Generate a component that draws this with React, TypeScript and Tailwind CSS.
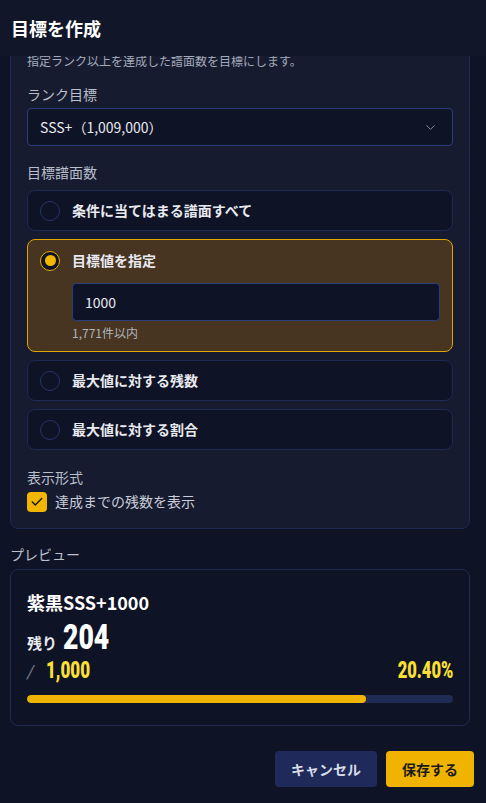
import React from "react";
import { ChevronDown, Check } from "lucide-react";

const FONT = { fontFamily: '"Noto Sans CJK JP", "Noto Sans", sans-serif' };
const NUM: React.CSSProperties = { fontFamily: '"Roboto", "Noto Sans", sans-serif' };

function Radio({ checked }: { checked?: boolean }) {
  if (checked) {
    return (
      <span className="flex h-[20px] w-[20px] shrink-0 items-center justify-center rounded-full border border-[#e8ac00] bg-[#0f1326]">
        <span className="h-[11px] w-[11px] rounded-full bg-[#f2b600]" />
      </span>
    );
  }
  return <span className="h-[20px] w-[20px] shrink-0 rounded-full border border-[#26346a] bg-[#0f1326]" />;
}

function Option({ label }: { label: string }) {
  return (
    <div className="flex h-[41px] items-center gap-[12px] rounded-[8px] border border-[#1e2a55] bg-[#0f1326] px-[12px]">
      <Radio />
      <span className="text-[14px] font-semibold text-[#e8eaf0]">{label}</span>
    </div>
  );
}

export default function App() {
  return (
    <div className="flex h-[803px] w-full flex-col bg-[#0f1326] text-[#e5e7eb]" style={FONT}>
      <div className="flex h-[56px] shrink-0 items-center bg-[#111628] px-[11px]">
        <h1 className="text-[18px] font-bold text-white">目標を作成</h1>
      </div>

      <div className="flex-1 overflow-hidden pl-[10px] pr-[16px]">
        <div className="-mt-[20px] rounded-[8px] border border-[#1e2a55] bg-[#161b30] px-[16px] pb-[16px] pt-[16px]">
          <p className="text-[12px] leading-[16px] text-[#a3aab8]">指定ランク以上を達成した譜面数を目標にします。</p>

          <div className="mt-[15px] text-[14px] leading-[20px] text-[#b9bfcb]">ランク目標</div>
          <div className="mt-[4px] flex h-[38px] items-center justify-between rounded-[4px] border border-[#2a3f7a] bg-[#0f1326] pl-[12px] pr-[14px]">
            <span className="text-[14px] text-[#e8eaf0]">SSS+（1,009,000）</span>
            <ChevronDown size={15} strokeWidth={1.5} className="text-[#8a90a0]" />
          </div>

          <div className="mt-[16px] text-[14px] leading-[20px] text-[#b9bfcb]">目標譜面数</div>
          <div className="mt-[8px] flex flex-col gap-[8px]">
            <Option label="条件に当てはまる譜面すべて" />
            <div className="rounded-[8px] border border-[#e0a600] bg-[#473421] px-[12px] pb-[10px] pt-[10px]">
              <div className="flex items-center gap-[12px]">
                <Radio checked />
                <span className="text-[14px] font-semibold text-[#e8eaf0]">目標値を指定</span>
              </div>
              <div className="ml-[32px] mt-[12px]">
                <div className="flex h-[38px] items-center rounded-[4px] border border-[#2a3f7a] bg-[#0f1326] px-[12px] text-[14px] text-[#e8eaf0]">
                  1000
                </div>
                <div className="mt-[4px] text-[12px] leading-[16px] text-[#b0b4bc]">1,771件以内</div>
              </div>
            </div>
            <Option label="最大値に対する残数" />
            <Option label="最大値に対する割合" />
          </div>

          <div className="mt-[17px] text-[14px] leading-[20px] text-[#b9bfcb]">表示形式</div>
          <div className="mt-[4px] flex items-center gap-[8px]">
            <span className="flex h-[20px] w-[20px] items-center justify-center rounded-[4px] bg-[#f2b600]">
              <Check size={14} strokeWidth={2.5} className="text-[#1a1a1a]" />
            </span>
            <span className="text-[14px] text-[#c9ced8]">達成までの残数を表示</span>
          </div>
        </div>

        <div className="mt-[15px] text-[14px] leading-[20px] text-[#b9bfcb]">プレビュー</div>
        <div className="mt-[5px] rounded-[8px] border border-[#1e2a55] bg-[#0f1326] px-[16px] pb-[22px] pt-[18px]">
          <div className="text-[18px] font-bold leading-[28px] text-white">紫黒SSS+1000</div>
          <div className="mt-[3px] flex items-baseline gap-[6px]">
            <span className="text-[15px] font-bold text-[#e8eaf0]">残り</span>
            <span className="inline-block origin-left scale-x-[0.76] text-[35px] font-black leading-[38px] text-white" style={NUM}>204</span>
          </div>
          <div className="flex items-baseline justify-between">
            <div className="flex items-baseline gap-[12px]">
              <span className="text-[18px] italic leading-[27px] text-[#6b7280]" style={NUM}>/</span>
              <span className="inline-block origin-left scale-x-[0.74] text-[23px] font-black leading-[27px] text-[#fde033]" style={NUM}>1,000</span>
            </div>
            <span className="inline-block origin-right scale-x-[0.72] text-[23px] font-black leading-[27px] text-[#fde033]" style={NUM}>20.40%</span>
          </div>
          <div className="mt-[10px] h-[8px] w-full overflow-hidden rounded-full bg-[#1f2a55]">
            <div className="h-full rounded-full bg-[#f0b400]" style={{ width: "79.6%" }} />
          </div>
        </div>
      </div>

      <div className="flex shrink-0 justify-end gap-[9px] px-[12px] pb-[16px]">
        <button className="h-[36px] rounded-[4px] bg-[#1f2a5a] px-[16px] text-[14px] font-bold text-[#d8dce6]">キャンセル</button>
        <button className="h-[36px] rounded-[4px] bg-[#f0b400] px-[16px] text-[14px] font-bold text-[#1a1a1a]">保存する</button>
      </div>
    </div>
  );
}
